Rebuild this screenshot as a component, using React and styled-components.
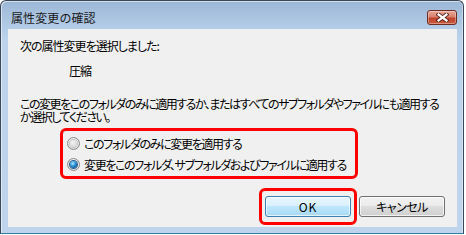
import React from 'react';
import styled, { createGlobalStyle } from 'styled-components';

const Global = createGlobalStyle`
  html, body {
    margin: 0;
    padding: 0;
    background: #ffffff;
  }
  body {
    font-family: "Noto Sans CJK JP", "Noto Sans", sans-serif;
    font-size: 12px;
    color: #000000;
  }
`;

const Window = styled.div`
  box-sizing: border-box;
  width: 464px;
  height: 234px;
  border: 1px solid #3b4656;
  border-bottom-color: #2f7f9c;
  border-radius: 6px 6px 0 0;
  background: linear-gradient(to bottom, #9cb7d6 0, #b2cbe6 26px, #bcd3eb 40px, #bdd4ec 100%);
  box-shadow: inset 1px 1px 0 rgba(255, 255, 255, 0.55), inset -1px 0 0 rgba(255, 255, 255, 0.4);
  display: flex;
  flex-direction: column;
`;

const TitleBar = styled.div`
  height: 28px;
  display: flex;
  align-items: flex-start;
  justify-content: space-between;
  padding: 0 6px 0 10px;
`;

const Title = styled.span`
  margin-top: 9px;
  font-size: 12px;
  line-height: 15px;
  color: #1a1a1a;
  letter-spacing: 0.1px;
`;

const CloseButton = styled.button`
  box-sizing: border-box;
  margin-top: 9px;
  width: 30px;
  height: 15px;
  padding: 0;
  border: 1px solid #6b2a22;
  border-radius: 3px;
  background: linear-gradient(to bottom, #e9a898 0, #d8806c 45%, #c0432c 55%, #c85a3c 100%);
  box-shadow: inset 0 0 0 1px rgba(255, 255, 255, 0.35);
  display: flex;
  align-items: center;
  justify-content: center;
`;

const Content = styled.div`
  flex: 1;
  margin: 0 6px 6px 7px;
  background: #f0f0f0;
  padding: 9px 12px 0 12px;
  display: flex;
  flex-direction: column;
  font-feature-settings: "palt";
  letter-spacing: -1px;
`;

const Line = styled.div`
  line-height: 15px;
  white-space: nowrap;
  margin-left: ${(p) => p.$indent || 0}px;
  margin-top: ${(p) => p.$top || 0}px;
`;

const Paragraph = styled.p`
  margin: 19px 0 0 0;
  line-height: 13px;
  white-space: nowrap;
  letter-spacing: -1.45px;
`;

const Highlight = styled.div`
  box-sizing: border-box;
  border: 3px solid #ff0000;
  border-radius: 6px;
`;

const OptionBox = styled(Highlight)`
  width: 298px;
  margin: 5px 0 0 40px;
  padding: 2px 0 1px 4px;
  display: flex;
  flex-direction: column;
`;

const Option = styled.label`
  height: 21px;
  display: flex;
  align-items: center;
  gap: 4px;
  white-space: nowrap;
  letter-spacing: -1.35px;
`;

const Radio = styled.span`
  box-sizing: border-box;
  flex: none;
  width: 13px;
  height: 13px;
  border-radius: 50%;
  border: 1px solid #8a8a8a;
  background: radial-gradient(circle at 50% 35%, #ffffff 0, #e6e6e6 60%, #cfcfcf 100%);
  display: flex;
  align-items: center;
  justify-content: center;
  &::after {
    content: "";
    width: 7px;
    height: 7px;
    border-radius: 50%;
    background: ${(p) =>
      p.$checked
        ? 'radial-gradient(circle at 40% 35%, #b9ecff 0, #3fa3e0 35%, #0e5ea8 70%, #0a3a72 100%)'
        : 'radial-gradient(circle at 40% 35%, #f4f4f4 0, #dadada 70%, #cfcfcf 100%)'};
    box-shadow: ${(p) => (p.$checked ? '0 0 0 1px #2c5f8e' : '0 0 0 1px #c4c4c4')};
  }
`;

const ButtonRow = styled.div`
  margin-top: 9px;
  display: flex;
  justify-content: flex-end;
  align-items: center;
  gap: 2px;
`;

const ButtonFocus = styled(Highlight)`
  padding: 5px 3px;
  display: flex;
`;

const Button = styled.button`
  box-sizing: border-box;
  width: 86px;
  height: 21px;
  padding: 0;
  font-family: "Noto Sans CJK JP", "Noto Sans", sans-serif;
  font-size: 12px;
  color: #000000;
  border-radius: 3px;
  border: 1px solid ${(p) => (p.$primary ? '#3c7fb1' : '#707070')};
  background: ${(p) =>
    p.$primary
      ? 'linear-gradient(to bottom, #eaf6fd 0, #d9f0fc 45%, #bee6fd 50%, #a7d9f5 100%)'
      : 'linear-gradient(to bottom, #f2f2f2 0, #ebebeb 45%, #dddddd 50%, #cfcfcf 100%)'};
  box-shadow: inset 0 0 0 1px rgba(255, 255, 255, 0.7);
  font-feature-settings: "palt";
  letter-spacing: ${(p) => (p.$primary ? '1px' : '-0.5px')};
`;

function CloseIcon() {
  return (
    <svg width="13" height="9" viewBox="0 0 13 9">
      <path d="M2.5 1.5 L10.5 7.5 M10.5 1.5 L2.5 7.5" stroke="#4a1d16" strokeWidth="4" strokeLinecap="square" />
      <path d="M2.5 1.5 L10.5 7.5 M10.5 1.5 L2.5 7.5" stroke="#ffffff" strokeWidth="2.2" strokeLinecap="square" />
    </svg>
  );
}

export default function App() {
  return (
    <>
      <Global />
      <Window>
        <TitleBar>
          <Title>属性変更の確認</Title>
          <CloseButton aria-label="閉じる">
            <CloseIcon />
          </CloseButton>
        </TitleBar>
        <Content>
          <Line>次の属性変更を選択しました:</Line>
          <Line $indent={49} $top={10}>圧縮</Line>
          <Paragraph>
            この変更をこのフォルダのみに適用するか、またはすべてのサブフォルダやファイルにも適用する
            <br />
            か選択してください。
          </Paragraph>
          <OptionBox>
            <Option>
              <Radio />
              このフォルダのみに変更を適用する
            </Option>
            <Option>
              <Radio $checked />
              変更をこのフォルダ、サブフォルダおよびファイルに適用する
            </Option>
          </OptionBox>
          <ButtonRow>
            <ButtonFocus>
              <Button $primary>OK</Button>
            </ButtonFocus>
            <Button>キャンセル</Button>
          </ButtonRow>
        </Content>
      </Window>
    </>
  );
}
